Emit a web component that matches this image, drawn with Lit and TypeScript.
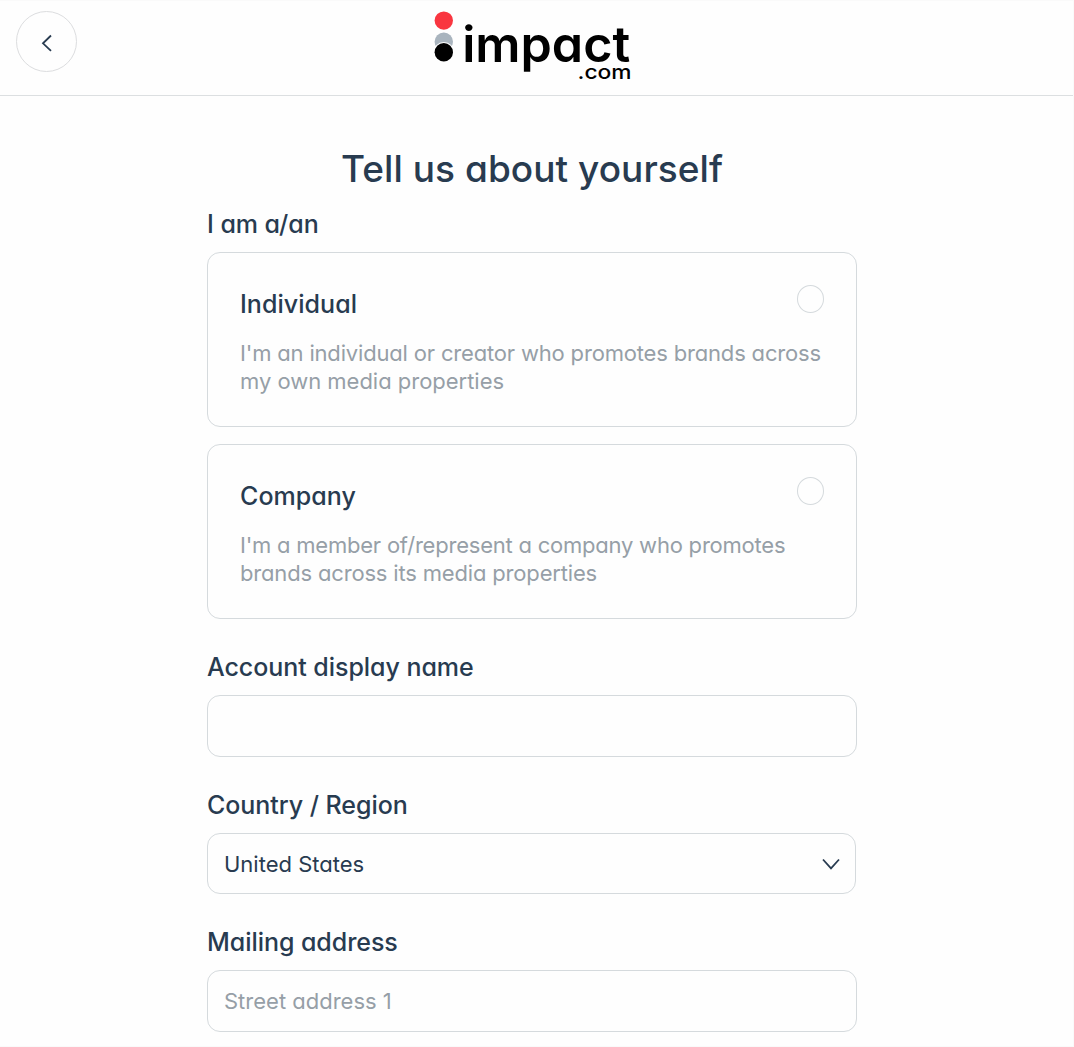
import { LitElement, html, css } from "lit";
import { customElement, property } from "lit/decorators.js";
import { styleMap } from "lit/directives/style-map.js";

interface Line {
  text: string;
  tracking: number;
}

const font = css`
  :host {
    box-sizing: border-box;
    font-family: Inter, "Open Sans", sans-serif;
    font-feature-settings: "cv11", "calt" 0;
    color: #283b50;
  }
  * {
    box-sizing: border-box;
  }
`;

@customElement("brand-logo")
class BrandLogo extends LitElement {
  static styles = [
    font,
    css`
      :host {
        display: block;
        width: 200px;
        height: 80px;
      }
      svg {
        display: block;
      }
      .name {
        font-size: 49.5px;
        font-weight: 600;
      }
      .suffix {
        font-size: 20px;
        font-weight: 450;
      }
    `,
  ];
  render() {
    return html`<svg width="200" height="80" viewBox="0 0 200 80" role="img">
      <circle cx="11.8" cy="10.6" r="9.2" fill="#f93640" />
      <circle cx="11.8" cy="31.7" r="9.2" fill="#a9b4be" />
      <circle cx="11.8" cy="42.3" r="10.3" fill="#fff" />
      <circle cx="11.8" cy="42.3" r="9.2" fill="#000" />
      <text class="name" x="30.2" y="52.3" textLength="168" lengthAdjust="spacingAndGlyphs">impact</text>
      <text class="suffix" x="145.5" y="69.2" textLength="54" lengthAdjust="spacingAndGlyphs">.com</text>
    </svg>`;
  }
}

@customElement("choice-card")
class ChoiceCard extends LitElement {
  @property() heading = "";
  @property({ attribute: false }) lines: Line[] = [];
  static styles = [
    font,
    css`
      :host {
        display: flex;
        justify-content: space-between;
        height: 175px;
        padding: 32px;
        border: 1px solid #d5dadd;
        border-radius: 13px;
      }
      .title {
        font-size: 25px;
        font-weight: 480;
        letter-spacing: 0.05px;
        line-height: 38px;
      }
      .desc {
        margin-top: 16px;
        font-size: 22px;
        line-height: 28px;
        color: #969fa7;
        white-space: nowrap;
      }
      .copy {
        width: 557px;
      }
      .radio {
        flex: none;
        width: 27px;
        height: 28px;
        border: 1px solid #d5dadd;
        border-radius: 50%;
      }
    `,
  ];
  render() {
    return html`<div class="copy">
        <div class="title">${this.heading}</div>
        <div class="desc">
          ${this.lines.map(
            (l) => html`<div style=${styleMap({ letterSpacing: `${l.tracking}px` })}><span>${l.text}</span></div>`
          )}
        </div>
      </div>
      <div class="radio"></div>`;
  }
}

@customElement("app-root")
class AppRoot extends LitElement {
  static styles = [
    font,
    css`
      :host {
        display: block;
        height: 1047px;
        overflow: hidden;
        background: #fefefe;
        border: 1px solid #fafafa;
        border-left-width: 0;
      }
      header {
        display: grid;
        grid-template-columns: 1fr 200px 1fr;
        height: 95px;
        padding: 10px 0 0 16px;
        border-bottom: 1px solid #dcdfe1;
      }
      .back {
        display: flex;
        align-items: center;
        justify-content: center;
        width: 61px;
        height: 61px;
        border: 1px solid #dcdddf;
        border-radius: 50%;
        background: none;
        padding: 2px 0 0 0;
      }
      .logo {
        margin-left: -13px;
        margin-top: -1px;
      }
      main {
        width: 650px;
        margin-left: 207px;
      }
      h1 {
        margin: 49px 0 0;
        text-align: center;
        font-size: 37px;
        font-weight: 470;
        letter-spacing: 0.05px;
        line-height: 48px;
      }
      .label {
        font-size: 25px;
        font-weight: 480;
        letter-spacing: -0.05px;
        line-height: 36px;
      }
      .first {
        margin-top: 13px;
        margin-bottom: 10px;
      }
      .cards {
        display: grid;
        gap: 17px;
        margin-bottom: 30px;
      }
      .field {
        display: flex;
        align-items: center;
        justify-content: space-between;
        height: 62px;
        margin: 10px 0 30px;
        padding: 0 16px;
        border: 1px solid #d5dadd;
        border-radius: 13px;
        font-size: 22px;
      }
      .select {
        width: 649px;
        height: 61px;
        padding-right: 15px;
      }
      .hint {
        color: #969fa7;
      }
    `,
  ];
  render() {
    return html`<header>
        <button class="back" aria-label="Back">
          <svg width="12" height="18" viewBox="0 0 12 18" fill="none" stroke="#283b50" stroke-width="1.8">
            <path d="M10 1.5 L2 9.3 L10 16.9" />
          </svg>
        </button>
        <brand-logo class="logo"></brand-logo>
      </header>
      <main>
        <h1><span>Tell us about yourself</span></h1>
        <div class="label first">I am a/an</div>
        <div class="cards">
          <choice-card
            .heading=${"Individual"}
            .lines=${[
              { text: "I'm an individual or creator who promotes brands across", tracking: -0.175 },
              { text: "my own media properties", tracking: -0.02 },
            ]}
          ></choice-card>
          <choice-card
            .heading=${"Company"}
            .lines=${[
              { text: "I'm a member of/represent a company who promotes", tracking: -0.22 },
              { text: "brands across its media properties", tracking: -0.17 },
            ]}
          ></choice-card>
        </div>
        <div class="label">Account display name</div>
        <div class="field"></div>
        <div class="label">Country / Region</div>
        <div class="field select">
          <span>United States</span>
          <svg width="18" height="12" viewBox="0 0 18 12" fill="none" stroke="#283b50" stroke-width="1.8">
            <path d="M1 1.5 L9 10.3 L17 1.5" />
          </svg>
        </div>
        <div class="label">Mailing address</div>
        <div class="field hint"><span>Street address 1</span></div>
      </main>`;
  }
}
